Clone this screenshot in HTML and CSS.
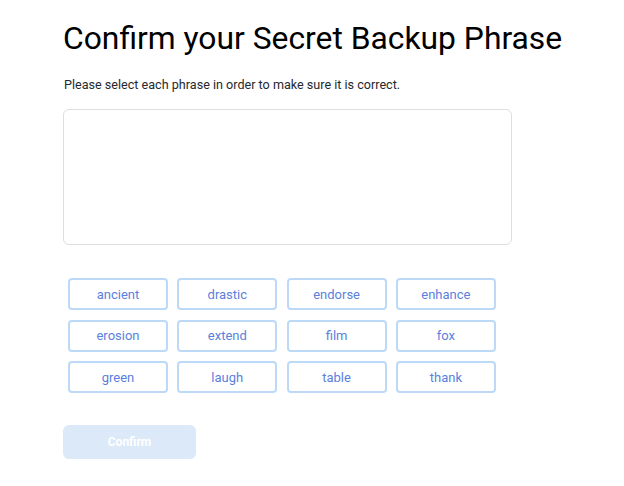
FILE: index.html
```html
<!DOCTYPE html>
<html>
<head>
<meta charset="utf-8">
<link rel="stylesheet" href="styles.css">
</head>
<body>
<div class="page">
  <h1 class="title">Confirm your Secret Backup Phrase</h1>
  <p class="subtitle">Please select each phrase in order to make sure it is correct.</p>
  <div class="phrase-box"></div>
  <div class="words">
    <button class="word">ancient</button>
    <button class="word">drastic</button>
    <button class="word">endorse</button>
    <button class="word">enhance</button>
    <button class="word">erosion</button>
    <button class="word">extend</button>
    <button class="word">film</button>
    <button class="word">fox</button>
    <button class="word">green</button>
    <button class="word">laugh</button>
    <button class="word">table</button>
    <button class="word">thank</button>
  </div>
  <button class="confirm" disabled>Confirm</button>
</div>
</body>
</html>
```
FILE: styles.css
```css
html, body {
  margin: 0;
  padding: 0;
  background: #ffffff;
}
body {
  font-family: Roboto, "Liberation Sans", sans-serif;
  color: #000;
}
.page {
  padding: 18px 0 0 63px;
  display: flex;
  flex-direction: column;
  align-items: flex-start;
}
.title {
  margin: 0;
  font-size: 31.8px;
  font-weight: 400;
  line-height: 40px;
  color: #000;
}
.subtitle {
  margin: 18px 0 0 1px;
  font-size: 12.6px;
  line-height: 18px;
  color: #24292e;
}
.phrase-box {
  margin-top: 15px;
  width: 447px;
  height: 134px;
  border: 1px solid #dedede;
  border-radius: 6px;
}
.words {
  margin: 33px 0 0 5px;
  display: grid;
  grid-template-columns: repeat(4, 100px);
  column-gap: 9.3px;
  row-gap: 9.5px;
}
.word {
  height: 32px;
  box-sizing: border-box;
  border: 2px solid #bcdaf7;
  border-radius: 4px;
  background: #fff;
  font-family: Roboto, "Liberation Sans", sans-serif;
  font-size: 13px;
  color: #5b7fdc;
  padding: 0;
}
.confirm {
  margin-top: 32px;
  width: 133px;
  height: 34px;
  border: none;
  border-radius: 6px;
  background: #dbe9f9;
  color: #fff;
  font-family: Roboto, "Liberation Sans", sans-serif;
  font-size: 12px;
  font-weight: 700;
}
```
